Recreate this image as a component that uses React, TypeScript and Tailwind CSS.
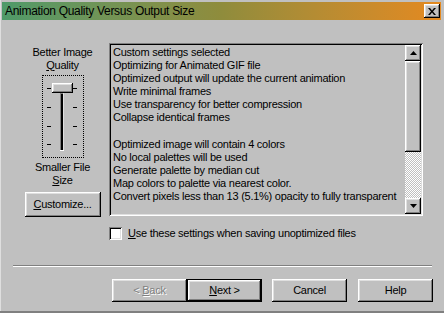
const raised =
  "shadow-[inset_-1px_-1px_#000,inset_1px_1px_#fff,inset_-2px_-2px_#808080,inset_2px_2px_#dfdfdf]";
const sunken =
  "shadow-[inset_1px_1px_#808080,inset_-1px_-1px_#fff,inset_2px_2px_#000,inset_-2px_-2px_#dfdfdf]";

const lines = [
  "Custom settings selected",
  "Optimizing for Animated GIF file",
  "Optimized output will update the current animation",
  "Write minimal frames",
  "Use transparency for better compression",
  "Collapse identical frames",
  "",
  "Optimized image will contain 4 colors",
  "No local palettes will be used",
  "Generate palette by median cut",
  "Map colors to palette via nearest color.",
  "Convert pixels less than 13 (5.1%) opacity to fully transparent",
];

function Arrow({ up }: { up?: boolean }) {
  return (
    <svg width="7" height="4" viewBox="0 0 7 4">
      <path d={up ? "M3.5 0 L7 4 L0 4 Z" : "M0 0 L7 0 L3.5 4 Z"} fill="#000" />
    </svg>
  );
}

function Slider() {
  const ticks = [13, 32, 51, 69];
  return (
    <div className="relative mt-[3.5px] h-[83px] w-[42px] border border-dotted border-black">
      <svg width="40" height="81" className="absolute left-0 top-0">
        {ticks.map((y) => (
          <g key={y}>
            <rect x="4" y={y - 1} width="4" height="1" fill="#000" />
            <rect x="30" y={y - 1} width="4" height="1" fill="#000" />
          </g>
        ))}
        <rect x="17" y="17" width="4" height="58" fill="#fff" />
        <rect x="17" y="17" width="3" height="57" fill="#808080" />
        <rect x="18" y="18" width="2" height="56" fill="#000" />
        <rect x="20" y="17" width="1" height="57" fill="#dfdfdf" />
      </svg>
      <div className={`absolute left-[9px] top-[7px] h-[10px] w-[21px] bg-[#c0c0c0] ${raised}`} />
    </div>
  );
}

function Button({
  children,
  className = "",
  disabled,
  isDefault,
}: {
  children: React.ReactNode;
  className?: string;
  disabled?: boolean;
  isDefault?: boolean;
}) {
  return (
    <div className={`${isDefault ? "border border-black" : ""} ${className}`}>
      <div
        className={`flex h-full w-full items-center justify-center bg-[#c0c0c0] ${raised} ${
          disabled ? "text-[#808080] [text-shadow:1px_1px_#fff]" : "text-black"
        }`}
      >
        {children}
      </div>
    </div>
  );
}

export default function App() {
  return (
    <div className="flex h-[313px] w-[444px] flex-col bg-[#c0c0c0] pl-[2px] pr-[3px] pt-[2px] font-['Liberation_Sans',Arial,sans-serif] text-[11px] leading-[13px] tracking-[-0.25px] text-black shadow-[inset_0_-2px_#808080,inset_1px_0_#dfdfdf]">
      {/* title bar */}
      <div className="flex h-[18px] items-center justify-between bg-gradient-to-r from-[#4e9a69] via-[#8f8c3c] to-[#e4891f] pl-[3px] pr-[1px]">
        <span className="text-[12px] tracking-[-0.3px] text-black">
          Animation Quality Versus Output Size
        </span>
        <div className={`flex h-[14px] w-[16px] items-center justify-center bg-[#c0c0c0] ${raised}`}>
          <svg width="8" height="7" viewBox="0 0 8 7">
            <path d="M0 0 L2 0 L4 2.5 L6 0 L8 0 L5 3.5 L8 7 L6 7 L4 4.5 L2 7 L0 7 L3 3.5 Z" fill="#000" />
          </svg>
        </div>
      </div>

      <div className="flex pt-[23px]">
        {/* left column */}
        <div className="flex w-[107px] flex-col items-center pl-[18px] pr-[4px] pt-[2.5px]">
          <div className="text-center">
            <div>Better Image</div>
            <div>
              <span className="underline">Q</span>uality
            </div>
          </div>
          <Slider />
          <div className="mt-[2.5px] text-center">
            <div>Smaller File</div>
            <div>
              <span className="underline">S</span>ize
            </div>
          </div>
          <Button className="mt-[5.5px] h-[25px] w-[76px]">
            <span>
              <span className="underline">C</span>ustomize...
            </span>
          </Button>
        </div>

        {/* settings list */}
        <div className={`flex h-[173px] w-[314px] bg-[#c0c0c0] p-[2px] ${sunken}`}>
          <div className="flex-1 whitespace-nowrap pl-[2px] pt-[1px] leading-[13.1px]">
            {lines.map((l, i) => (
              <div key={i} className="h-[13.1px]">
                {l}
              </div>
            ))}
          </div>
          <div className="flex w-[16px] flex-col">
            <div className={`flex h-[16px] items-center justify-center bg-[#c0c0c0] ${raised}`}>
              <Arrow up />
            </div>
            <div className={`h-[91px] bg-[#c0c0c0] ${raised}`} />
            <div className="flex-1 bg-[image:repeating-conic-gradient(#fff_0_25%,#c0c0c0_0_50%)] bg-[length:2px_2px]" />
            <div className={`flex h-[16px] items-center justify-center bg-[#c0c0c0] ${raised}`}>
              <Arrow />
            </div>
          </div>
        </div>
      </div>

      {/* checkbox */}
      <div className="mt-[10px] flex items-center gap-[6px] pl-[107px]">
        <div className={`h-[13px] w-[13px] bg-white ${sunken}`} />
        <span>
          <span className="underline">U</span>se these settings when saving unoptimized files
        </span>
      </div>

      {/* separator */}
      <div className="ml-[11px] mr-[9px] mt-[25px] h-[2px] border-b border-t border-b-white border-t-[#808080]" />

      {/* buttons */}
      <div className="mt-[12px] flex pl-[110px]">
        <Button disabled className="h-[23px] w-[75px]">
          <span>
            &lt; <span className="underline">B</span>ack
          </span>
        </Button>
        <Button isDefault className="h-[23px] w-[75px]">
          <span>
            <span className="underline">N</span>ext &gt;
          </span>
        </Button>
        <Button className="ml-[10px] h-[23px] w-[75px]">Cancel</Button>
        <Button className="ml-[11px] h-[23px] w-[75px]">Help</Button>
      </div>
    </div>
  );
}
